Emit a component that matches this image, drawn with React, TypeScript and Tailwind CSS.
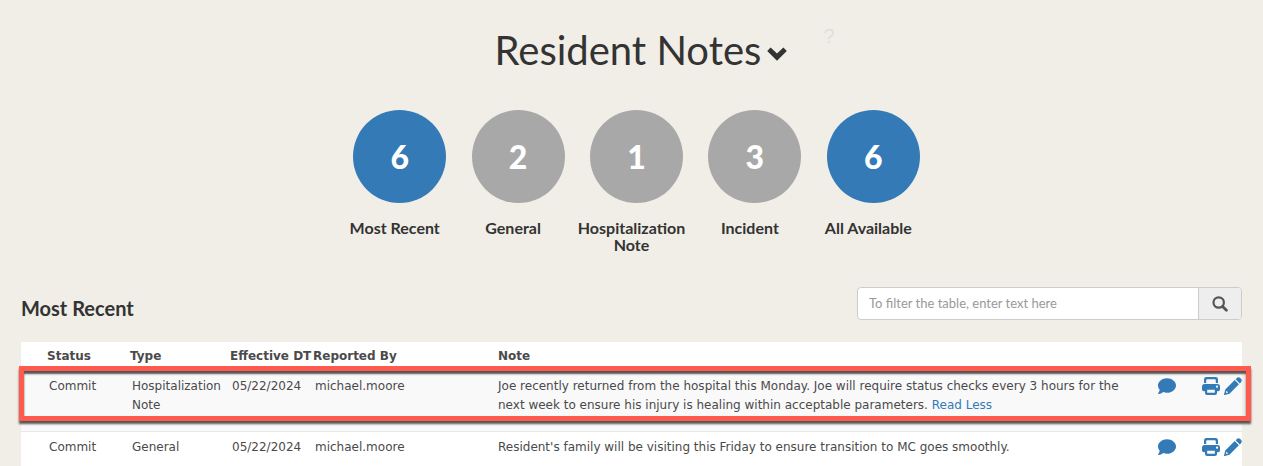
import React from 'react';
import { FaComment } from 'react-icons/fa6';

const categories = [
    { label: 'Most Recent', count: 6, active: true },
    { label: 'General', count: 2, active: false },
    { label: 'Hospitalization Note', count: 1, active: false },
    { label: 'Incident', count: 3, active: false },
    { label: 'All Available', count: 6, active: true },
];

const notes = [
    {
        status: 'Commit',
        type: 'Hospitalization Note',
        date: '05/22/2024',
        reportedBy: 'michael.moore',
        text: 'Joe recently returned from the hospital this Monday. Joe will require status checks every 3 hours for the next week to ensure his injury is healing within acceptable parameters.',
        expanded: true,
    },
    {
        status: 'Commit',
        type: 'General',
        date: '05/22/2024',
        reportedBy: 'michael.moore',
        text: "Resident's family will be visiting this Friday to ensure transition to MC goes smoothly.",
        expanded: false,
    },
];

const ChevronIcon = () => (
    <svg viewBox="0 0 20 14" className="w-5 h-[14px]" fill="currentColor" aria-hidden="true">
        <path d="M3.6 0.6 10 6.6 16.4 0.6 19.8 4 10 13.7 0.2 4Z" />
    </svg>
);

const SearchIcon = () => (
    <svg viewBox="0 0 16 16" className="w-4 h-4" fill="none" stroke="currentColor" aria-hidden="true">
        <circle cx="6.7" cy="6.5" r="5.2" strokeWidth="2.2" />
        <path d="M10.6 10.4 14.4 14.2" strokeWidth="2.8" strokeLinecap="round" />
    </svg>
);

const PrintIcon = () => (
    <svg viewBox="0 0 18 18" className="size-[18px]" fill="currentColor" aria-hidden="true">
        <path d="M2 6V2.4Q2 0 4.4 0H13.6Q16 0 16 2.4V6H13.8V3.2Q13.8 2.2 12.8 2.2H5.2Q4.2 2.2 4.2 3.2V6Z" />
        <path fillRule="evenodd" d="M2.6 7H15.4Q18 7 18 9.6V12.4Q18 14.2 16 14.2H15V16Q15 18 13 18H5Q3 18 3 16V14.2H2Q0 14.2 0 12.4V9.6Q0 7 2.6 7ZM5.2 12.8V15.8H12.8V12.8ZM15 8.6A1.1 1.1 0 1 0 15 10.8A1.1 1.1 0 1 0 15 8.6Z" />
    </svg>
);

const PencilIcon = () => (
    <svg viewBox="0 0 18 18" className="size-[18px]" fill="currentColor" aria-hidden="true">
        <path d="M12.6 1.2Q14.3-.5 16 .8L17.2 2Q18.5 3.7 16.8 5.4L15.8 6.4 11.6 2.2Z" />
        <path fillRule="evenodd" d="M10.7 3.1 14.9 7.3 5.5 16.7 0.6 18Q-.1 18.1 0 17.4L1.3 12.5ZM2.5 13.7 1.9 16.1 4.3 15.5Z" />
    </svg>
);

const NotesHeader: React.FC = () => (
    <header className="flex justify-center items-start pl-[66px]">
        <h1 className="text-[40px] leading-[48px]">
            <button type="button" className="flex items-center gap-[6px]">
                Resident Notes
                <span className="pt-2"><ChevronIcon /></span>
            </button>
        </h1>
        <a href="#help" aria-label="Help" className="ml-9 text-xl leading-5 text-[#dde0dd] font-['Liberation_Sans',sans-serif]">?</a>
    </header>
);

const CategoryList: React.FC = () => (
    <nav className="grid grid-cols-5 w-[592px] max-w-full mx-auto mt-9">
        {categories.map(({ label, count, active }) => (
            <button key={label} type="button" className="flex flex-col items-center">
                <span className="pl-[10px]">
                    <span className={`flex items-center justify-center size-[93px] rounded-full text-white text-[32px] font-black ${active ? 'bg-[#337ab7]' : 'bg-[#a8a8a8]'}`}>
                        {count}
                    </span>
                </span>
                <span className="mt-4 text-base leading-[17px] font-bold">{label}</span>
            </button>
        ))}
    </nav>
);

const NotesTable: React.FC = () => (
    <table className="w-full table-fixed bg-white text-left text-xs leading-[19px] text-[#4a4a4a] font-['Verdana','DejaVu_Sans',sans-serif]">
        <colgroup>
            <col className="w-[109px]" />
            <col className="w-[100px]" />
            <col className="w-[83px]" />
            <col className="w-[185px]" />
            <col />
            <col className="w-[48px]" />
            <col className="w-[44px]" />
        </colgroup>
        <thead>
            <tr className="h-[29px] whitespace-nowrap">
                <th className="pl-[26px]">Status</th>
                <th>Type</th>
                <th>Effective DT</th>
                <th>Reported By</th>
                <th>Note</th>
                <th aria-label="Comments" />
                <th aria-label="Actions" />
            </tr>
        </thead>
        <tbody>
            {notes.map((note) => (
                <tr key={note.type} className="relative align-top border-b border-[#e8e8e8] odd:bg-[#f9f9f9]">
                    <td className="pt-[6px] pb-4 pl-7">
                        {note.status}
                        {note.expanded && (
                            <span className="absolute -top-[5px] bottom-[10px] -left-[2px] -right-[9px] border-5 border-[#ff5a4d] pointer-events-none shadow-[0_3px_2px_#555,inset_0_3px_2px_#555]" />
                        )}
                    </td>
                    <td className="pt-[6px] pb-4 pl-[2px]">{note.type}</td>
                    <td className="pt-[6px] pb-4 pl-[2px]">{note.date}</td>
                    <td className="pt-[6px] pb-4 pl-[2px]">{note.reportedBy}</td>
                    <td className="pt-[6px] pb-4 pr-4">
                        <span>{note.text}</span>
                        {note.expanded && <> <a href="#read-less" className="text-[#337ab7]">Read Less</a></>}
                    </td>
                    <td className="pt-[6px] text-[#337ab7]">
                        <button type="button" aria-label="Comment" className="block ml-2"><FaComment size={18} /></button>
                    </td>
                    <td className="pt-[6px] text-[#337ab7]">
                        <div className="flex justify-end gap-1">
                            <button type="button" aria-label="Print"><PrintIcon /></button>
                            <button type="button" aria-label="Edit"><PencilIcon /></button>
                        </div>
                    </td>
                </tr>
            ))}
        </tbody>
    </table>
);

const App: React.FC = () => (
    <main className="min-h-screen bg-[#f1eee7] pt-[26px] pl-[21px] pr-[21px] text-[#333] font-['Lato',sans-serif]">
        <NotesHeader />
        <CategoryList />
        <div className="flex justify-between items-start mt-[34px] mb-[22px]">
            <h2 className="pt-[9px] text-xl leading-6 font-bold">Most Recent</h2>
            <form className="flex w-[385px] max-w-full h-[33px] border border-[#ccc] rounded-[4px] overflow-hidden bg-white">
                <input
                    type="text"
                    aria-label="Filter the table"
                    placeholder="To filter the table, enter text here"
                    className="flex-1 min-w-0 px-[11px] text-[13px] placeholder:text-[#999] outline-none"
                />
                <button type="button" aria-label="Search" className="flex items-center justify-center w-[43px] bg-[#eee] border-l border-[#ccc] text-[#555]">
                    <SearchIcon />
                </button>
            </form>
        </div>
        <NotesTable />
    </main>
);

export default App;
